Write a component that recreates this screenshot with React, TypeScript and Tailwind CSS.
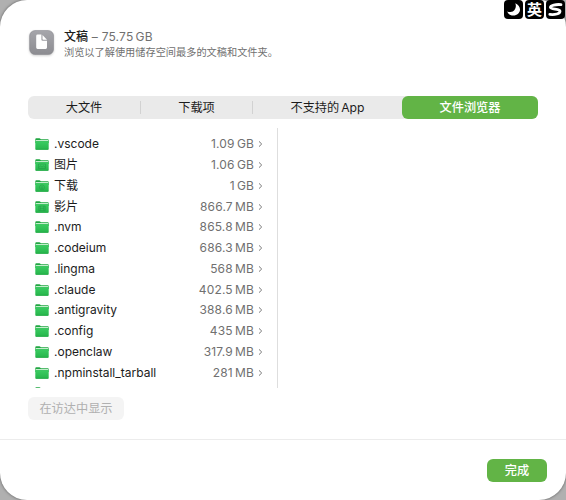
import { clsx } from 'clsx'

type Glyph = 'pictures' | 'downloads' | 'movies'

const tabs = [
  { label: '大文件', width: 'w-[113px]' },
  { label: '下载项', width: 'w-[112px]' },
  { label: '不支持的 App', width: 'w-[149px]' },
  { label: '文件浏览器', width: 'w-[136px]' },
]

const files: { name: string; size: string; glyph?: Glyph }[] = [
  { name: '.vscode', size: '1.09 GB' },
  { name: '图片', size: '1.06 GB', glyph: 'pictures' },
  { name: '下载', size: '1 GB', glyph: 'downloads' },
  { name: '影片', size: '866.7 MB', glyph: 'movies' },
  { name: '.nvm', size: '865.8 MB' },
  { name: '.codeium', size: '686.3 MB' },
  { name: '.lingma', size: '568 MB' },
  { name: '.claude', size: '402.5 MB' },
  { name: '.antigravity', size: '388.6 MB' },
  { name: '.config', size: '435 MB' },
  { name: '.openclaw', size: '317.9 MB' },
  { name: '.npminstall_tarball', size: '281 MB' },
]

function FolderIcon({ glyph }: { glyph?: Glyph }) {
  return (
    <svg width="14" height="12" viewBox="0 0 14 12" className="shrink-0">
      <defs>
        <linearGradient id="folder" x1="0" y1="0" x2="0" y2="1">
          <stop offset="0" stopColor="#3bcc62" />
          <stop offset="1" stopColor="#26b54b" />
        </linearGradient>
      </defs>
      <path d="M.3 1.3Q.3.3 1.3.3h3.2q.5 0 .9.5l.4.4h7q.9 0 .9.9V5H.3z" fill="#20a641" />
      <path d="M.8 2.1h12.4v1.1H.8z" fill="#d6f6dd" />
      <path d="M.3 3.2h13.4v7.5q0 1-1 1H1.3q-1 0-1-1z" fill="url(#folder)" />
      <path d="M.7 11.3h12.6" stroke="#1fa642" strokeWidth=".7" />
      <g fill="none" stroke="#229746" strokeWidth=".7" opacity=".75">
        {glyph === 'pictures' && <path d="M3.5 5h7v4.5h-7zM3.5 8.5l2-1.5 1.5 1 1.5-1 2 1.5" />}
        {glyph === 'downloads' && <path d="M9.5 7.3a2.5 2.5 0 1 1-5 0 2.5 2.5 0 0 1 5 0zM7 5.8v2.8M6 7.6l1 1 1-1" />}
        {glyph === 'movies' && <path d="M3.8 5h6.4v4.7H3.8zM5.2 5v4.7M8.8 5v4.7M5.2 7.3h3.6" />}
      </g>
    </svg>
  )
}

function Header() {
  return (
    <header className="flex h-[68px] items-start pl-[29px] pt-[29px]">
      <svg width="26" height="28" viewBox="0 0 26 28" className="mt-px shrink-0 drop-shadow-[0_1px_1px_rgba(0,0,0,0.2)]">
        <defs>
          <linearGradient id="doc" x1="0" y1="0" x2="0" y2="1">
            <stop offset="0" stopColor="#a6a6ab" />
            <stop offset="1" stopColor="#8c8c91" />
          </linearGradient>
        </defs>
        <rect x=".6" y=".5" width="24" height="24" rx="5.5" fill="url(#doc)" stroke="#85858a" strokeWidth=".5" />
        <path d="M7.2 6q0-1.4 1.4-1.4h3.8v4.9q0 1.3 1.3 1.3H18v6.8q0 1.4-1.4 1.4h-8q-1.4 0-1.4-1.4z" fill="#fff" />
        <path d="M13.5 5 18 9.8h-3.7q-.8 0-.8-.8z" fill="#fff" />
      </svg>
      <div className="pl-[9px]">
        <h1 className="h-[15px] whitespace-pre text-[12px] font-medium leading-[15px] text-[#1c1c1c]">
          文稿
          <span className="font-normal tracking-[0.3px] text-[#707070]"> – </span>
          <span className="font-normal tracking-[0.15px] text-[#707070] [word-spacing:-1.3px]">75.75 GB</span>
        </h1>
        <p className="mt-px text-[10.2px] leading-[14px] text-[#707070]">浏览以了解使用储存空间最多的文稿和文件夹。</p>
      </div>
    </header>
  )
}

function SegmentedTabs() {
  return (
    <nav className="ml-7 mt-7 flex h-[23px] w-[510px] items-center rounded-md bg-[#eaeaea] text-[12.2px]">
      {tabs.map((tab, i) => (
        <button
          key={tab.label}
          className={clsx(
            'flex items-center justify-center [word-spacing:-1.5px]',
            tab.width,
            i < 2 && 'h-[13px] border-r border-[#d2d2d2]',
            i === 3 ? 'h-[23px] rounded-md bg-[#62b446] font-medium text-white' : 'text-[#1c1c1c]',
          )}
        >
          <span className="pt-[2px]">{tab.label}</span>
        </button>
      ))}
    </nav>
  )
}

function FileList() {
  return (
    <ul className="h-[260px] w-[250px] overflow-hidden border-r border-[#dedede] pt-[6px] text-[12px]">
      {files.map((file) => (
        <li key={file.name} className="flex h-[20.75px] items-center pl-[7px] pr-[14px] text-[#1c1c1c]">
          <FolderIcon glyph={file.glyph} />
          <span className="flex-1 pl-[5px]">{file.name}</span>
          <span className="tracking-[0.15px] text-[#707070] [word-spacing:-1.3px]">{file.size}</span>
          <svg width="5" height="8" viewBox="0 0 5 8" className="ml-1 shrink-0" fill="none" stroke="#777" strokeWidth="1">
            <path d="M1 1.4 3.7 4 1 6.6" />
          </svg>
        </li>
      ))}
      {/* next folder, clipped by the list's bottom edge */}
      <li className="pl-[7px] pt-[4px]">
        <FolderIcon />
      </li>
    </ul>
  )
}

function InputBadge() {
  return (
    <div className="absolute left-[504px] top-0 flex gap-[2px]">
      <span className="flex h-[19px] w-[19px] items-center justify-center rounded-[4px] bg-black">
        <svg width="15" height="15" viewBox="0 0 15 15" fill="#fff">
          <path d="M9.3 1.2C14.4 3.3 15.4 8.6 12.1 11.8 8.6 15 2.9 13.8 1.2 9.4c3.1 1.2 5.9.8 7.3-1.3 1.5-2.1 1.8-4.4.8-6.9z" />
        </svg>
      </span>
      <span className="flex h-[19px] w-[19px] items-center justify-center rounded-[4px] bg-black text-[15px] font-bold leading-none text-white">
        英
      </span>
      <span className="flex h-[19px] w-[19px] items-center justify-center rounded-[4px] bg-black">
        <svg width="17" height="15" viewBox="0 0 17 15" fill="none" stroke="#fff" strokeWidth="2.8" strokeLinecap="round">
          <path d="M14 2.6C9 2.2 3.2 3.2 3.4 5.5c.2 2.2 9.8 1.2 9.6 3.8-.2 2.6-5 3.6-10.2 3.1" />
        </svg>
      </span>
    </div>
  )
}

export default function App() {
  return (
    <div className="relative h-[500px] w-[566px] overflow-hidden bg-[#b0b0b0] font-['Inter','Noto_Sans_CJK_SC',sans-serif]">
      <main className="flex h-[500px] flex-col rounded-[27px] bg-white shadow-[0_0_3px_rgba(0,0,0,0.5)]">
        <Header />
        <SegmentedTabs />
        <section className="ml-7 mt-[9px]">
          <FileList />
          <button className="mt-[9px] flex h-[23px] w-[96px] items-center justify-center rounded-md bg-[#f4f4f4] pt-[2px] text-[12.2px] text-[#b0b0b0]">
            在访达中显示
          </button>
        </section>
        <footer className="mt-[19px] flex h-[61px] justify-end border-t border-[#ececec] pr-[19px] pt-[19px]">
          <button className="flex h-[23px] w-[60px] items-center justify-center rounded-md bg-[#62b446] pt-[2px] text-[12.2px] font-medium text-white">
            完成
          </button>
        </footer>
      </main>
      <InputBadge />
    </div>
  )
}
